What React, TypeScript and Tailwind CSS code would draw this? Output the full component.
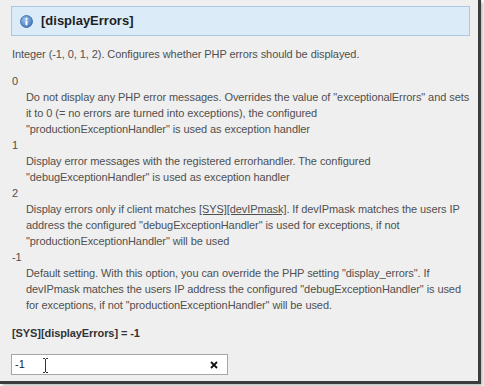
import React from 'react';

const font = { fontFamily: '"Liberation Sans", Arial, sans-serif' };

const InfoIcon = () => (
  <svg width="13" height="13" viewBox="0 0 13 13">
    <defs>
      <radialGradient id="ig" cx="0.4" cy="0.35" r="0.7">
        <stop offset="0" stopColor="#9cc3ee" />
        <stop offset="1" stopColor="#3f73b8" />
      </radialGradient>
    </defs>
    <circle cx="6.5" cy="6.5" r="6" fill="url(#ig)" stroke="#3567a8" strokeWidth="0.8" />
    <circle cx="6.5" cy="3.8" r="1.1" fill="#fff" />
    <rect x="5.5" y="5.6" width="2" height="4.6" rx="0.5" fill="#fff" />
  </svg>
);

const Term = ({ children }: { children: React.ReactNode }) => (
  <dt className="h-4 leading-4">{children}</dt>
);

const Desc = ({ children }: { children: React.ReactNode }) => (
  <dd className="pl-[14px] leading-4 whitespace-nowrap">{children}</dd>
);

export default function App() {
  return (
    <div className="w-[484px] h-[386px] bg-white overflow-hidden" style={font}>
      <div className="w-[481px] h-[384px] bg-[#efefef] border-r-[3px] border-b-[3px] border-[#3c3c3c] shadow-[2px_2px_3px_rgba(0,0,0,0.25)] pl-[11px] pt-[6px]">
        <div className="w-[459px] h-[30px] border border-[#a9c8e6] bg-[#dcebf8] flex items-center pl-[8px] gap-[8px]">
          <InfoIcon />
          <span className="text-[13px] font-bold text-[#1f1f1f]">[displayErrors]</span>
        </div>

        <div className="pl-[1px] text-[11px] tracking-[-0.08px] text-[#505050]">
          <p className="mt-[10px] leading-4">Integer (-1, 0, 1, 2). Configures whether PHP errors should be displayed.</p>

          <dl className="mt-[11px]">
            <Term>0</Term>
            <Desc>
              Do not display any PHP error messages. Overrides the value of "exceptionalErrors" and sets
              <br />
              it to 0 (= no errors are turned into exceptions), the configured
              <br />
              "productionExceptionHandler" is used as exception handler
            </Desc>
            <Term>1</Term>
            <Desc>
              Display error messages with the registered errorhandler. The configured
              <br />
              "debugExceptionHandler" is used as exception handler
            </Desc>
            <Term>2</Term>
            <Desc>
              Display errors only if client matches <span className="underline">[SYS][devIPmask]</span>. If devIPmask matches the users IP
              <br />
              address the configured "debugExceptionHandler" is used for exceptions, if not
              <br />
              "productionExceptionHandler" will be used
            </Desc>
            <Term>-1</Term>
            <Desc>
              Default setting. With this option, you can override the PHP setting "display_errors". If
              <br />
              devIPmask matches the users IP address the configured "debugExceptionHandler" is used
              <br />
              for exceptions, if not "productionExceptionHandler" will be used.
            </Desc>
          </dl>

          <div className="mt-[12px] leading-4 font-bold text-[#333]">[SYS][displayErrors] = -1</div>
        </div>

        <div className="mt-[13px] w-[217px] h-[21px] border border-[#a6a6a6] bg-white flex items-center pl-[3px] pr-[9px] relative">
          <span className="text-[11px] text-[#222]">-1</span>
          <svg className="absolute left-[30px] top-[3px]" width="7" height="15" viewBox="0 0 7 15">
            <path d="M1 0.5h2M4 0.5h2M3.5 1v13M1 14.5h2M4 14.5h2" stroke="#333" strokeWidth="1" fill="none" />
          </svg>
          <svg className="ml-auto" width="8" height="8" viewBox="0 0 8 8">
            <path d="M1 1L7 7M7 1L1 7" stroke="#111" strokeWidth="1.8" />
          </svg>
        </div>
      </div>
    </div>
  );
}
